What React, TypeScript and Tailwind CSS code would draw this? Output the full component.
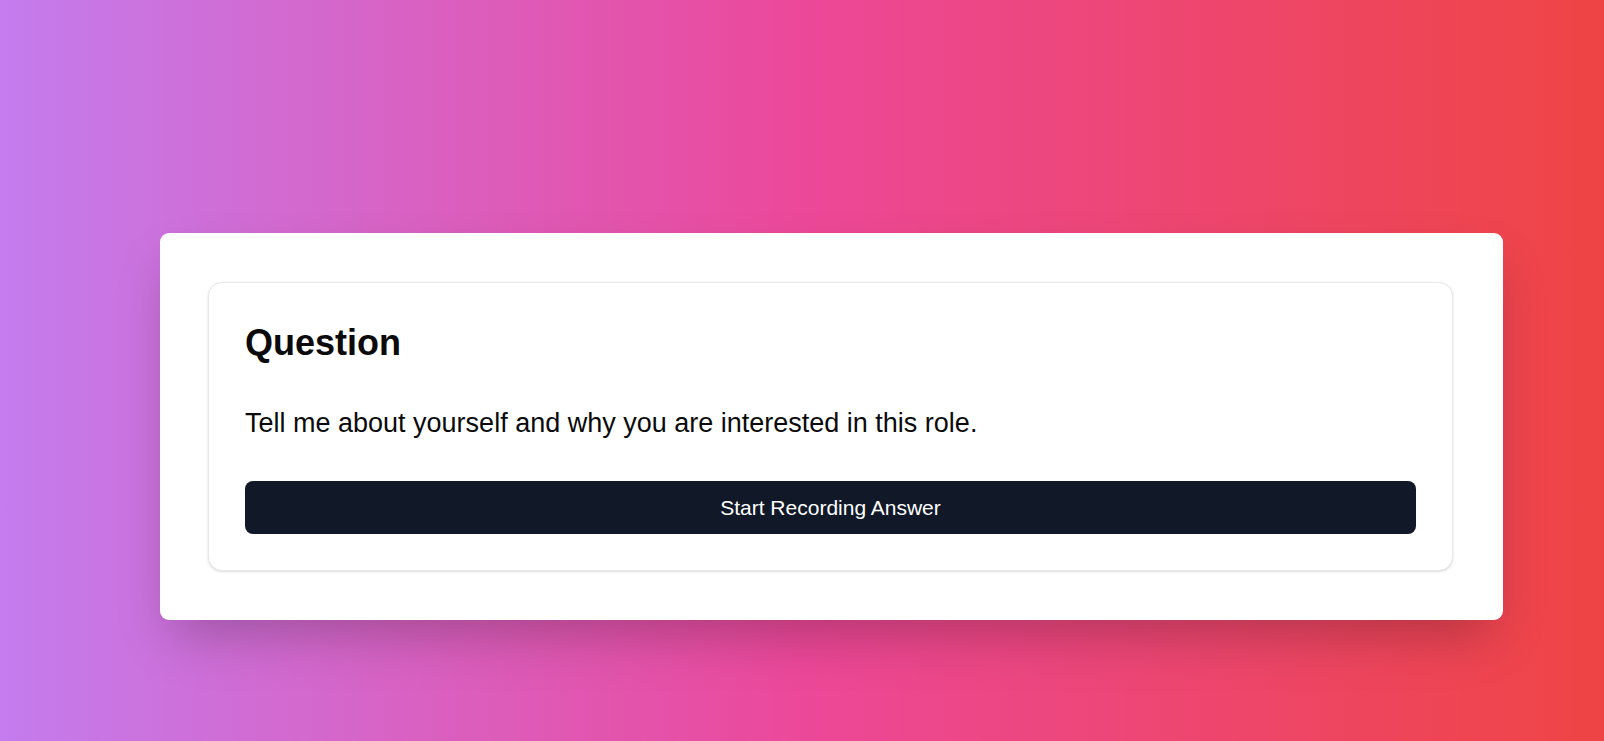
import React from "react";

export default function App() {
  return (
    <div
      className="min-h-screen w-full overflow-hidden bg-[linear-gradient(to_right,#c47cee,#ec4899,#ef4444)] pt-[233px] pl-[160px]"
      style={{ fontFamily: '"Liberation Sans", Arial, sans-serif' }}
    >
      <div className="w-[1343px] rounded-[9px] bg-white pl-[48px] pr-[50px] py-[49px] shadow-[0_25px_50px_-12px_rgba(0,0,0,0.25)]">
        <div className="rounded-[14px] border border-[#e5e7eb] bg-white p-[36px] shadow-[0_1px_3px_0_rgba(0,0,0,0.1),0_1px_2px_-1px_rgba(0,0,0,0.1)]">
          <h2 className="text-[36px] font-bold leading-[48px] text-[#0a0a0a]">Question</h2>
          <p className="mt-[38px] text-[27px] leading-[36px] text-[#0a0a0a]">
            Tell me about yourself and why you are interested in this role.
          </p>
          <button className="mt-[40px] flex h-[53px] w-full items-center justify-center rounded-[8px] bg-[#111827] text-[21px] text-white">
            Start Recording Answer
          </button>
        </div>
      </div>
    </div>
  );
}
